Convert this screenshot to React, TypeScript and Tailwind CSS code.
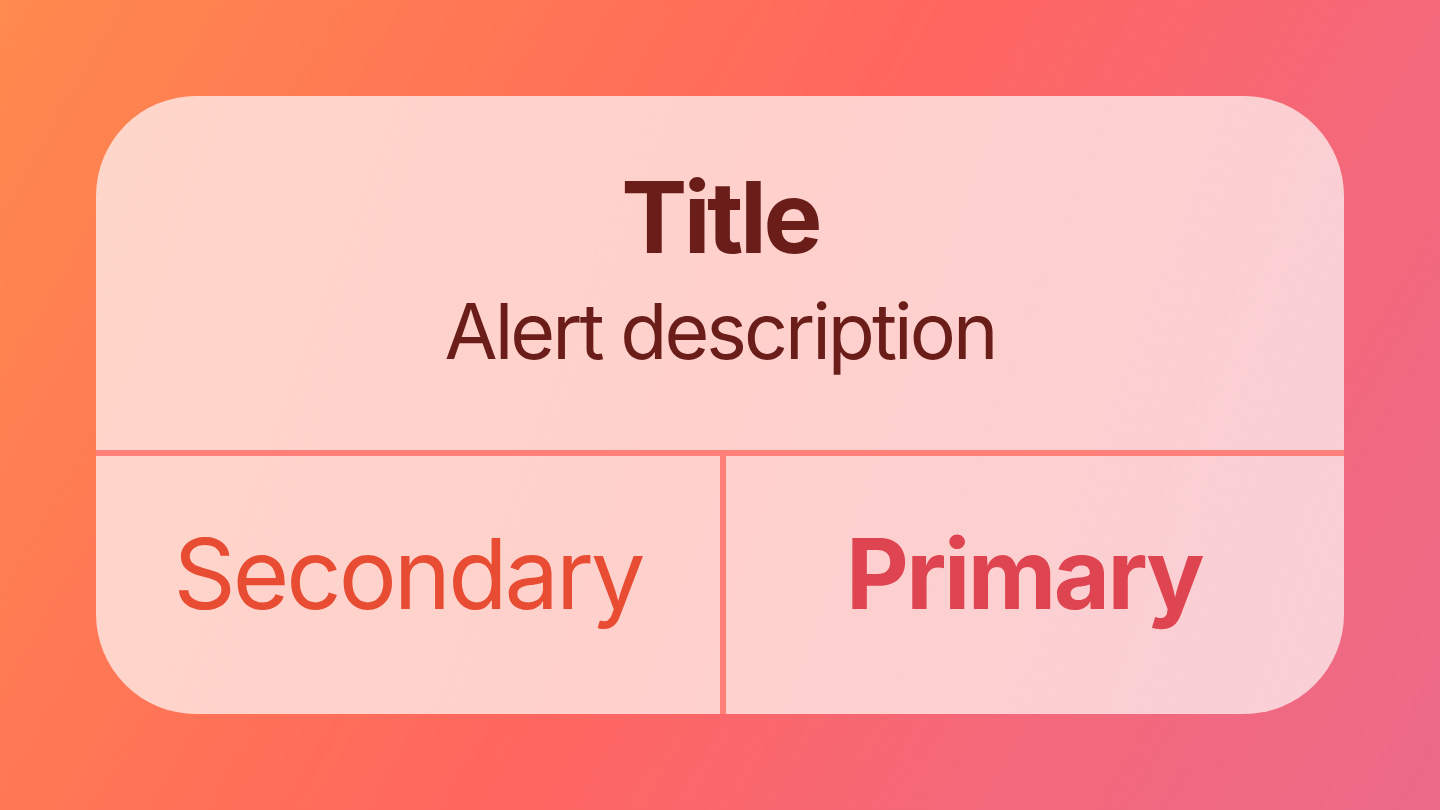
export default function App() {
  return (
    <main
      className="w-[1440px] h-[810px] flex items-center justify-center bg-[linear-gradient(120deg,#ff8a4e_0%,#ff7456_30%,#ff665f_50%,#f4687a_75%,#ec6a88_100%)]"
      style={{ fontFamily: 'Inter, "Noto Sans", sans-serif' }}
    >
      {/* Alert card */}
      <div className="w-[1248px] h-[618px] rounded-[100px] overflow-hidden flex flex-col bg-[linear-gradient(110deg,#ffd6ca_0%,#ffd0cc_50%,#f9cfd6_100%)]">
        <div className="h-[354px] flex flex-col items-center justify-center text-[#6a1d19] pb-[8px]">
          <h1 className="text-[99px] leading-[116px] font-bold tracking-[-3.5px]">Title</h1>
          <p className="text-[77px] leading-[96px] mt-[8px] tracking-[-3px]">Alert description</p>
        </div>
        <div className="h-[6px] bg-[#ff8079]" />
        <div className="flex-1 flex">
          <button className="w-[624px] flex items-center justify-center pb-[22px] text-[97px] text-[#e84c32] tracking-[-3px]">
            Secondary
          </button>
          <div className="w-[6px] bg-[#ff8079]" />
          <button className="flex-1 flex items-center justify-center pb-[22px] pr-[22px] text-[97px] font-bold text-[#de4550] tracking-[-2.5px]">
            Primary
          </button>
        </div>
      </div>
    </main>
  )
}
